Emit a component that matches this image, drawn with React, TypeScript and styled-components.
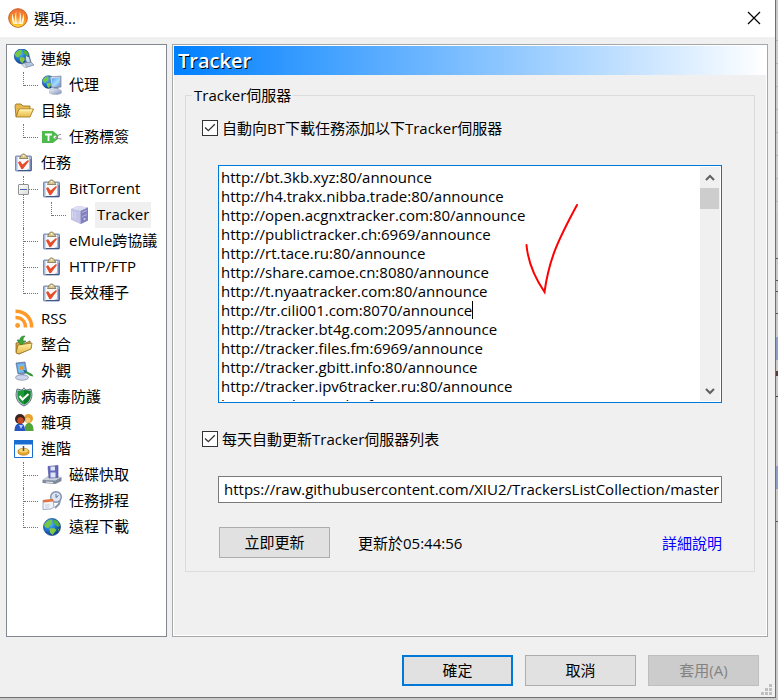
import React, { ReactNode } from "react";
import styled, { createGlobalStyle, css } from "styled-components";

const GlobalStyle = createGlobalStyle`
  * { box-sizing: border-box; }
  body {
    margin: 0;
    background: #c9c9c9;
    color: #000;
    font: 400 15px/20px "Open Sans", "Noto Sans CJK TC", sans-serif;
  }
  button, input, textarea { font: inherit; color: inherit; margin: 0; }
`;

const Desktop = styled.div`
  min-height: 100vh;
  display: flex;
  padding: 0 2px 2px 0;
  background:
    linear-gradient(#8f9fc4, #8f9fc4) right 337px / 2px 23px no-repeat,
    linear-gradient(#8f9fc4, #8f9fc4) right 466px / 2px 23px no-repeat,
    linear-gradient(#5a5a5a, #5a5a5a) right 258px / 2px 1px no-repeat,
    linear-gradient(#5a5a5a, #5a5a5a) right 280px / 2px 1px no-repeat,
    linear-gradient(#5a5a5a, #5a5a5a) right 291px / 2px 1px no-repeat,
    linear-gradient(#5a5a5a, #5a5a5a) right 313px / 2px 1px no-repeat,
    linear-gradient(#5a3a3a, #5a3a3a) right 371px / 2px 5px no-repeat,
    linear-gradient(#5a3a3a, #5a3a3a) right 396px / 2px 1px no-repeat,
    linear-gradient(#5a5a5a, #5a5a5a) right 521px / 2px 1px no-repeat,
    repeating-linear-gradient(#cdcdcd 0 22px, #b4b4b4 22px 23px) right 18px / 2px 194px no-repeat,
    #c9c9c9;
`;

const Dialog = styled.main`
  flex: 1;
  min-width: 0;
  position: relative;
  display: flex;
  flex-direction: column;
  background: #f0f0f0;
  border-right: 1px solid #707070;
  border-bottom: 1px solid #707070;
`;

const TitleBar = styled.header`
  height: 37px;
  display: flex;
  align-items: center;
  gap: 6px;
  padding: 0 14px 2px 8px;
  background: #fff;
`;

const Title = styled.h1`
  flex: 1;
  margin: 0;
  font-size: 15px;
  font-weight: inherit;
`;

const CloseButton = styled.button`
  display: flex;
  padding: 0;
  border: 0;
  background: none;
`;

const Body = styled.div`
  flex: 1;
  display: flex;
  gap: 5px;
  padding: 7px 7px 0 6px;
`;

const TreePane = styled.nav`
  width: 161px;
  flex: none;
  padding: 1px 0 0 7px;
  background: #fff;
  border: 1px solid #828790;
`;

const TreeList = styled.ul`
  margin: 0;
  padding: 0;
  list-style: none;
`;

const TreeRow = styled.div`
  height: 26px;
  display: flex;
  align-items: center;
`;

const Guide = styled.span<{ $kind: Line }>`
  position: relative;
  width: 28px;
  height: 26px;
  flex: none;
  &::before {
    content: "";
    position: absolute;
    left: 9px;
    top: 0;
    height: ${(p) => (p.$kind === "last" ? "14px" : "26px")};
    border-left: 1px dotted #777;
  }
  &::after {
    content: "";
    position: absolute;
    left: 10px;
    top: 13px;
    width: 14px;
    border-top: ${(p) => (p.$kind === "pass" ? "0" : "1px dotted #777")};
  }
`;

const Expander = styled.button`
  position: absolute;
  z-index: 1;
  left: 4px;
  top: 8px;
  width: 11px;
  height: 11px;
  padding: 0;
  border: 1px solid #919191;
  border-radius: 1px;
  background: linear-gradient(#4b63a7, #4b63a7) center / 7px 1px no-repeat,
    linear-gradient(135deg, #fff, #dcdcdc);
`;

const TreeLink = styled.a<{ $selected?: boolean }>`
  margin-left: 5px;
  padding: 0 2px 2px;
  line-height: 24px;
  color: #000;
  white-space: nowrap;
  text-decoration: none;
  background: ${(p) => (p.$selected ? "#f0f0f0" : "transparent")};
`;

const Panel = styled.section`
  flex: 1;
  min-width: 0;
  background: #f0f0f0;
  border: 1px solid #a5a8ab;
  box-shadow: inset 0 0 0 1px #fff;
  padding: 1px;
`;

const PanelTitle = styled.h2`
  height: 29px;
  margin: 0 0 10px;
  padding: 0 4px;
  background: linear-gradient(90deg, #0080ff, #fff);
  color: #fff;
  font-size: 20px;
  font-weight: 600;
  line-height: 29px;
  text-shadow: 1px 1px 0 #000;
`;

const Group = styled.fieldset`
  margin: 0 11px;
  padding: 0;
  min-width: 0;
  border: 1px solid #dcdcdc;
`;

const Legend = styled.legend`
  margin-left: 6px;
  padding: 0 2px;
`;

const GroupBody = styled.div`
  padding: 13px 32px 13px 32px;
`;

const CheckLine = styled.label`
  display: flex;
  align-items: center;
  gap: 4px;
  margin-left: -16px;
`;

const checkMark = css`
  clip-path: polygon(5% 49%, 13% 41%, 36% 64%, 86% 14%, 94% 22%, 36% 80%);
`;

const CheckBox = styled.input`
  appearance: none;
  width: 16px;
  height: 16px;
  flex: none;
  padding: 1px;
  background: #fff;
  border: 1px solid #333;
  display: grid;
  &:checked::before {
    content: "";
    background: #333;
    ${checkMark}
  }
`;

const ListBox = styled.div`
  position: relative;
  display: flex;
  margin: 27px 0 26px;
  padding: 1px;
  background: #fff;
  border: 1px solid #0078d7;
`;

const TrackerText = styled.textarea`
  flex: 1;
  min-width: 0;
  height: 234px;
  padding: 1px 0 0 1px;
  border: 0;
  outline: 0;
  resize: none;
  background: transparent;
  line-height: 19px;
  white-space: pre;
  overflow: auto;
  scrollbar-width: none;
`;

const ScrollBar = styled.div`
  width: 20px;
  display: flex;
  flex-direction: column;
  background: #f0f0f0;
`;

const ScrollButton = styled.button`
  height: 21px;
  display: grid;
  place-items: center;
  padding: 0;
  border: 0;
  background: #f0f0f0;
`;

const ScrollTrack = styled.div`
  flex: 1;
  &::before {
    content: "";
    display: block;
    width: 19px;
    height: 21px;
    background: #cdcdcd;
  }
`;

const Caret = styled.span`
  position: absolute;
  left: 253px;
  top: 135px;
  width: 1px;
  height: 18px;
  background: #000;
`;

const Annotation = styled.svg`
  position: absolute;
  left: 304px;
  top: 36px;
  pointer-events: none;
`;

const UrlInput = styled.input`
  display: block;
  width: 100%;
  height: 27px;
  margin: 27px 0 24px;
  padding: 0 2px 2px 5px;
  border: 1px solid #7a7a7a;
  background: #fff;
`;

const UpdateRow = styled.div`
  display: flex;
  align-items: center;
  padding-left: 1px;
`;

const UpdateStatus = styled.span`
  flex: 1;
  padding-left: 28px;
`;

const HelpLink = styled.a`
  color: #00f;
  text-decoration: none;
`;

const PushButton = styled.button<{ $primary?: boolean }>`
  width: 111px;
  height: 31px;
  padding: 0 0 2px;
  background: #e1e1e1;
  border: ${(p) => (p.$primary ? "2px solid #0078d7" : "1px solid #adadad")};
  &:disabled {
    color: #838383;
    background: #ccc;
    border-color: #bfbfbf;
  }
`;

const Footer = styled.footer`
  display: flex;
  justify-content: flex-end;
  gap: 12px;
  padding: 18px 16px 11px;
`;

const Grip = styled.svg`
  position: absolute;
  right: 3px;
  bottom: 2px;
`;

const IconSvg = styled.svg`
  width: 20px;
  height: 20px;
  flex: none;
`;

const Svg = ({ children }: { children: ReactNode }) => (
  <IconSvg viewBox="0 0 20 20" aria-hidden="true">
    {children}
  </IconSvg>
);

const DefsSvg = styled.svg`
  position: absolute;
`;

const Defs = () => (
  <DefsSvg width="0" height="0" aria-hidden="true">
    <defs>
      <radialGradient id="sea" cx=".35" cy=".3" r=".8">
        <stop offset="0" stopColor="#6ec3f5" />
        <stop offset=".5" stopColor="#1c74d0" />
        <stop offset="1" stopColor="#0a2f7c" />
      </radialGradient>
      <linearGradient id="steel" x2="1" y2="1">
        <stop offset="0" stopColor="#f4f7fd" />
        <stop offset="1" stopColor="#7f8fb5" />
      </linearGradient>
      <linearGradient id="screen" x2="1" y2="1">
        <stop offset="0" stopColor="#4b9cf0" />
        <stop offset=".6" stopColor="#a5dcff" />
        <stop offset="1" stopColor="#5d9fe0" />
      </linearGradient>
      <linearGradient id="gold" x2="0" y2="1">
        <stop offset="0" stopColor="#fff0a0" />
        <stop offset="1" stopColor="#e9b949" />
      </linearGradient>
      <linearGradient id="ember" x2="0" y2="1">
        <stop offset="0" stopColor="#f0703c" />
        <stop offset=".5" stopColor="#f58a1e" />
        <stop offset="1" stopColor="#ffd21e" />
      </linearGradient>
    </defs>
  </DefsSvg>
);

const LogoIcon = () => (
  <Svg>
    <circle cx="10" cy="10" r="9.3" fill="url(#ember)" stroke="#c85a1e" strokeWidth="1" />
    <path d="M5.3 16C3 11 4 8 4.800 5.500 5 9 6 12 7 15.500C6.400 10 7 6 8.300 3.500 8 8 8.500 12 9.300 16.500L10 8l.7 8.500C11.500 12 12 8 11.700 3.500 13 6 13.600 10 13 15.500 14 12 15 9 15.200 5.500 16 8 17 11 14.700 16Z" fill="#fff4dc" />
    <path d="M4 14.500C7 18.500 13 18.500 16 14.500L14 17.500 10 19 6 17.500Z" fill="#ffd83c" />
  </Svg>
);

const GlobeShape = () => (
  <>
    <circle cx="10" cy="10" r="8.500" fill="url(#sea)" stroke="#123f8c" strokeWidth=".7" />
    <path d="M3.500 5.500 8 2.500 10.500 3 9 5.500 10 7 7.500 8.500 6.500 11 3.500 10.500 2 8Z" fill="#73c943" />
    <path d="M12 2.500 15.500 4 18 8.500 16 10 13.500 8 12 6Z" fill="#4fb336" />
    <path d="M7.500 11.500 12 11 14.500 13 12 16 10.500 18 8 15.500Z" fill="#82c843" />
    <path d="M16 12 17.500 11.500 16 15Z" fill="#50a83a" />
  </>
);

const GlobeIcon = () => <Svg><GlobeShape /></Svg>;

const ConnectionIcon = () => (
  <Svg>
    <g transform="translate(-1 -1.500) scale(.88)"><GlobeShape /></g>
    <path d="m11 6 5 2 1.500 6-5 .5-2-3.500Z" fill="#64758f" />
    <path d="m12 7 3 1.500 1 4.500-3 .2-1-3Z" fill="#c5def5" />
    <path d="m9 14 8-1 3 3-8 2.500Z" fill="#b4c6df" stroke="#71819d" strokeWidth=".7" />
    <path d="m7.500 15.500 3-1 2 2.500-2 1.500Z" fill="#d8e2ef" stroke="#7d8da5" strokeWidth=".5" />
  </Svg>
);

const ProxyIcon = () => (
  <Svg>
    <g transform="translate(-1 -.5) scale(.75)"><GlobeShape /></g>
    <path d="m8 2 11-1v11L9.500 13Z" fill="url(#steel)" stroke="#6b7fa9" strokeWidth=".7" />
    <path d="m9.500 3.500 8-.8v7.800l-7 .8Z" fill="url(#screen)" />
    <path d="M12 12h4l1 4h-5Z" fill="#7887ad" />
    <path d="M7.500 15c4-2 10-2 12 1v2c-3 2-9 2-12 0Z" fill="url(#steel)" stroke="#9da8c5" strokeWidth=".5" />
  </Svg>
);

const FolderIcon = () => (
  <Svg>
    <path d="M1 4.500 2 3h5l2 2h7v4H5L2 15.500Z" fill="#e8b950" stroke="#9b7722" strokeWidth=".9" />
    <path d="m2 16 3-8h14.500L16 16Z" fill="url(#gold)" stroke="#a57d25" strokeWidth=".9" />
    <path d="M5.800 9H18" stroke="#fff7c7" />
  </Svg>
);

const TagIcon = () => (
  <Svg>
    <path d="M0 4h11l5 4v4l-5 4H0Z" fill="#4cbb4c" />
    <path d="M3 7.500h7M6.500 7.500V14" stroke="#fff" strokeWidth="1.800" />
    <circle cx="13" cy="10" r="1.500" fill="#fff" />
    <path d="M13 10.500c3 0 2-3 6-3M14 11c2 0 3 1 5.500 1" stroke="#888" fill="none" />
  </Svg>
);

const TaskIcon = () => (
  <Svg>
    <rect x="1.500" y="3" width="16" height="15" rx=".8" fill="#a9badb" stroke="#5f77a4" strokeWidth=".8" />
    <path d="M3.500 4h11.500v11.500L12.500 17h-9Z" fill="#f8f9fd" />
    <path d="M17 6v11.500H4" stroke="#405683" fill="none" />
    <path d="M5.500 5.500 7 2.500 8.500 1h2L12 2.500l2 3Z" fill="#d8c793" stroke="#807042" strokeWidth=".8" />
    <circle cx="9.700" cy="2.700" r=".8" fill="#fff" />
    <path d="m4 9.500 2-1.500 2.500 3.500L14 7l1 1-6 8-1.500.2Z" fill="#e84b27" />
  </Svg>
);

const ServerIcon = () => (
  <Svg>
    <path d="m1 4 7-3 10 1.500v13L11 19 1 14.500Z" fill="#a7a7d6" />
    <path d="m1 4 7-3 10 1.500L10.500 6Z" fill="#dddff5" />
    <path d="M10.500 6 18 2.500v13L10.500 19Z" fill="#8181bd" />
    <path d="m1 4 9.500 2v13L1 14.500Z" fill="#c3c4e7" />
    <path d="m12 7 5-2v1l-5 2Zm0 4 5-2v1l-5 2Z" fill="#b8b9e0" />
    <path d="M2.500 6.500v6M5 7v7" stroke="#d8d9f2" />
    <circle cx="14.500" cy="14" r="1" fill="#d0d0f0" />
  </Svg>
);

const RssIcon = () => (
  <Svg>
    <g fill="none" stroke="#ff9a28" strokeWidth="3.500">
      <path d="M1.500 2.300C11 2.300 17.700 9 17.700 18.500" />
      <path d="M1.500 8.500c6 0 10 4 10 10" />
    </g>
    <circle cx="3.600" cy="16.500" r="2.400" fill="#ff9a28" />
  </Svg>
);

const ImportIcon = () => (
  <Svg>
    <path d="m2 8 4-1 3 2 7-3 1 7-12 6-3-2Z" fill="#d9a63d" stroke="#72591f" strokeWidth=".7" />
    <path d="m2 18 2-8 14-2-1 6-12 5Z" fill="url(#gold)" stroke="#8b6d26" strokeWidth=".8" />
    <path d="M11 1C7 1 6 3 6 5H3l4 5 5-4H9c0-2 0-3 2-5Z" fill="#3da53b" stroke="#267726" strokeWidth=".6" />
  </Svg>
);

const AppearanceIcon = () => (
  <Svg>
    <path d="m2 2 9-1 2 11-9 1Z" fill="#7899c9" stroke="#4e6f9f" strokeWidth=".7" />
    <path d="m3.500 3.500 6.500-.8 1.300 8-6.500.8Z" fill="#6cc2f5" />
    <circle cx="8" cy="7" r="2.200" fill="#e59a35" />
    <path d="m6 13 4-1 1 4H7Z" fill="#8494b5" />
    <ellipse cx="8" cy="16.500" rx="6.500" ry="2.700" fill="#cbd4e8" stroke="#7c88a4" strokeWidth=".7" />
    <path d="m10 9 8 4 1.500 2.500-3-.5L10 11Z" fill="#37963b" />
    <path d="m9 9 4 1-2 2Z" fill="#235fa6" />
  </Svg>
);

const ShieldIcon = () => (
  <Svg>
    <path d="M10 .8 12 3l5-1 1 5c0 6-3 10-8 12C5 17 2 13 2 7l1-5 5 1Z" fill="#b4c3cd" stroke="#4d606d" strokeWidth=".8" />
    <path d="m10 3 6.500 1v4c0 4-2 7.500-6.500 9.500-4.500-2-6.500-5.500-6.500-9.500V4Z" fill="#199b38" />
    <path d="m10 3 6.500 1v4c0 4-2 7.500-6.500 9.500Z" fill="#0d7c29" />
    <path d="m5.500 9 3 3.500L14.500 7" fill="none" stroke="#fff" strokeWidth="2" />
  </Svg>
);

const PeopleIcon = () => (
  <Svg>
    <circle cx="14.500" cy="5.500" r="4.500" fill="#e8a12c" />
    <path d="M10.500 18c0-6 2-8 4.500-8s4.500 2 4.500 8Z" fill="#51a438" />
    <circle cx="14" cy="7" r="2.500" fill="#f5ca73" />
    <path d="M.5 18C.5 12 3 10.500 6 10.500s5 1.500 5 7.500Z" fill="#2656c2" />
    <circle cx="6" cy="6" r="5" fill="#3b2320" />
    <circle cx="6.500" cy="7.500" r="3.200" fill="#c44b28" />
    <path d="m5 12 2 4 2-4Z" fill="#b9d0ff" />
  </Svg>
);

const AdvancedIcon = () => (
  <Svg>
    <path d="M.5 1.500h18v17H.5Z" fill="#fff" stroke="#1a6cd0" />
    <path d="M0 1h19v4.500H0Z" fill="#1a6cd0" />
    <path d="M4 12c0-3 10-4 11 0v2c-2 3-9 3-11 0Z" fill="#e4a52f" stroke="#a86c17" strokeWidth=".6" />
    <ellipse cx="9.500" cy="11.500" rx="4.500" ry="2" fill="#f8d46c" />
    <path d="M9.500 7v5" stroke="#4b4f65" strokeWidth="1.500" />
  </Svg>
);

const DiskIcon = () => (
  <Svg>
    <path d="m.5 15 6-4 13 1v4l-6 3-13-1Z" fill="#7f899b" />
    <path d="m.5 15 6-4 13 1-6 3.500Z" fill="#c9d0da" />
    <path d="m6 1.500 10-1v12l-9 .5Z" fill="#6268bc" stroke="#444a96" strokeWidth=".6" />
    <path d="M8.500 1.500h4.500v4H8.500Zm0 6h5v5h-5Z" fill="#e0e5f5" />
    <path d="m4 17 7 .6" stroke="#eef1f4" />
  </Svg>
);

const ScheduleIcon = () => (
  <Svg>
    <path d="m13 17 4-4 1-4" fill="none" stroke="#8797ad" strokeWidth="2" />
    <circle cx="14" cy="6" r="5.300" fill="#dbe4f2" stroke="#7e90ad" strokeWidth="1.400" />
    <path d="M14 3v3.500l2.500-2" fill="none" stroke="#59709b" />
    <path d="m1 9.500 10-1 1 7.500-3 2-8 .5Z" fill="#f0f3f9" stroke="#8b9ab4" strokeWidth=".8" />
    <path d="m1 9 10-1v2.500L1 11.500Z" fill="#e7713c" />
    <path d="M3 14h5M3 16h4" stroke="#c4cedd" />
  </Svg>
);

type Line = "last" | "mid" | "pass";
interface Entry {
  icon: ReactNode;
  label: string;
  id: string;
  guides?: Line[];
  expanded?: boolean;
  selected?: boolean;
}

const entries: Entry[] = [
  { id: "connection", icon: <ConnectionIcon />, label: "連線" },
  { id: "proxy", icon: <ProxyIcon />, label: "代理", guides: ["last"] },
  { id: "folders", icon: <FolderIcon />, label: "目錄" },
  { id: "labels", icon: <TagIcon />, label: "任務標簽", guides: ["last"] },
  { id: "tasks", icon: <TaskIcon />, label: "任務" },
  { id: "bittorrent", icon: <TaskIcon />, label: "BitTorrent", guides: ["mid"], expanded: true },
  { id: "tracker", icon: <ServerIcon />, label: "Tracker", guides: ["pass", "last"], selected: true },
  { id: "emule", icon: <TaskIcon />, label: "eMule跨協議", guides: ["mid"] },
  { id: "http", icon: <TaskIcon />, label: "HTTP/FTP", guides: ["mid"] },
  { id: "seeding", icon: <TaskIcon />, label: "長效種子", guides: ["last"] },
  { id: "rss", icon: <RssIcon />, label: "RSS" },
  { id: "integration", icon: <ImportIcon />, label: "整合" },
  { id: "appearance", icon: <AppearanceIcon />, label: "外觀" },
  { id: "antivirus", icon: <ShieldIcon />, label: "病毒防護" },
  { id: "misc", icon: <PeopleIcon />, label: "雜項" },
  { id: "advanced", icon: <AdvancedIcon />, label: "進階" },
  { id: "cache", icon: <DiskIcon />, label: "磁碟快取", guides: ["mid"] },
  { id: "schedule", icon: <ScheduleIcon />, label: "任務排程", guides: ["mid"] },
  { id: "remote", icon: <GlobeIcon />, label: "遠程下載", guides: ["last"] },
];

const trackers = [
  "http://bt.3kb.xyz:80/announce",
  "http://h4.trakx.nibba.trade:80/announce",
  "http://open.acgnxtracker.com:80/announce",
  "http://publictracker.ch:6969/announce",
  "http://rt.tace.ru:80/announce",
  "http://share.camoe.cn:8080/announce",
  "http://t.nyaatracker.com:80/announce",
  "http://tr.cili001.com:8070/announce",
  "http://tracker.bt4g.com:2095/announce",
  "http://tracker.files.fm:6969/announce",
  "http://tracker.gbitt.info:80/announce",
  "http://tracker.ipv6tracker.ru:80/announce",
  "http://tracker.trackerfix.com:80/announce",
].join("\n");

export default function App() {
  return (
    <Desktop>
      <GlobalStyle />
      <Defs />
      <Dialog>
        <TitleBar>
          <LogoIcon />
          <Title>選項...</Title>
          <CloseButton aria-label="關閉">
            <svg width="14" height="14" viewBox="0 0 14 14">
              <path d="m1 1 12 12M13 1 1 13" stroke="#000" strokeWidth="1.200" />
            </svg>
          </CloseButton>
        </TitleBar>
        <Body>
          <TreePane>
            <TreeList>
              {entries.map((e) => (
                <li key={e.id}>
                  <TreeRow>
                    {e.guides?.map((kind, i) => (
                      <Guide key={i} $kind={kind}>
                        {e.expanded && <Expander aria-label="收合" aria-expanded="true" />}
                      </Guide>
                    ))}
                    {e.icon}
                    <TreeLink href={`#${e.id}`} $selected={e.selected}>{e.label}</TreeLink>
                  </TreeRow>
                </li>
              ))}
            </TreeList>
          </TreePane>
          <Panel>
            <PanelTitle>Tracker</PanelTitle>
            <Group>
              <Legend>Tracker伺服器</Legend>
              <GroupBody>
                <CheckLine>
                  <CheckBox type="checkbox" defaultChecked />
                  <span>自動向BT下載任務添加以下Tracker伺服器</span>
                </CheckLine>
                <ListBox>
                  <TrackerText aria-label="Tracker" defaultValue={trackers} spellCheck={false} />
                  <ScrollBar>
                    <ScrollButton aria-label="向上捲動">
                      <svg width="10" height="8" viewBox="0 0 10 8"><path d="m1 6 4-4 4 4" fill="none" stroke="#606060" strokeWidth="2" /></svg>
                    </ScrollButton>
                    <ScrollTrack />
                    <ScrollButton aria-label="向下捲動">
                      <svg width="10" height="8" viewBox="0 0 10 8"><path d="m1 2 4 4 4-4" fill="none" stroke="#606060" strokeWidth="2" /></svg>
                    </ScrollButton>
                  </ScrollBar>
                  <Caret />
                  <Annotation width="58" height="94" viewBox="0 0 58 94">
                    <path d="M3.500 43C5 60 12 76 21.500 90 26 58 34 40 54 3" fill="none" stroke="#f00" strokeWidth="2" strokeLinecap="round" />
                  </Annotation>
                </ListBox>
                <CheckLine>
                  <CheckBox type="checkbox" defaultChecked />
                  <span>每天自動更新Tracker伺服器列表</span>
                </CheckLine>
                <UrlInput
                  aria-label="更新網址"
                  defaultValue="https://raw.githubusercontent.com/XIU2/TrackersListCollection/master/best.txt"
                />
                <UpdateRow>
                  <PushButton>立即更新</PushButton>
                  <UpdateStatus>更新於05:44:56</UpdateStatus>
                  <HelpLink href="#help">詳細說明</HelpLink>
                </UpdateRow>
              </GroupBody>
            </Group>
          </Panel>
        </Body>
        <Footer>
          <PushButton $primary>確定</PushButton>
          <PushButton>取消</PushButton>
          <PushButton disabled>套用(A)</PushButton>
        </Footer>
        <Grip width="11" height="11" viewBox="0 0 11 11" aria-hidden="true">
          <path d="M8 0h3v3H8ZM4 4h3v3H4Zm4 0h3v3H8ZM0 8h3v3H0Zm4 0h3v3H4Zm4 0h3v3H8Z" fill="#bfbfbf" />
        </Grip>
      </Dialog>
    </Desktop>
  );
}
